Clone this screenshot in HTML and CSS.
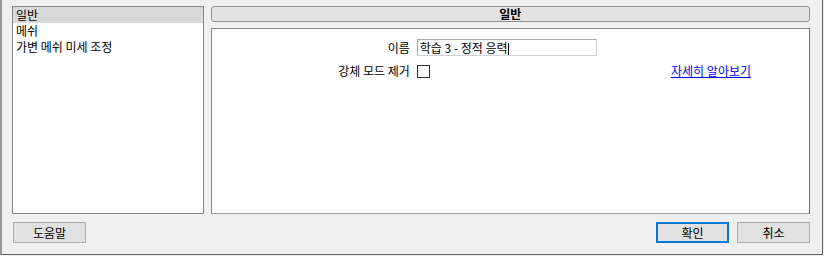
FILE: index.html
```html
<!DOCTYPE html>
<html>
    <head>
    <title>일반</title>
    <meta charset="UTF-8">
    <link rel="stylesheet" href="styles.css">
    </head>

    <body>
        <div class="ventana">
            <div class="principal">
                <div class="lista">
                    <div class="item seleccionado">일반</div>
                    <div class="item">메쉬</div>
                    <div class="item">가변 메쉬 미세 조정</div>
                </div>

                <div class="derecha">
                    <div class="titulo">일반</div>
                    <div class="panel">
                        <div class="formulario">
                            <span class="etiqueta">이름</span>
                            <div class="caja">학습 3 - 정적 응력<span class="cursor"></span></div>
                            <span></span>

                            <span class="etiqueta">강체 모드 제거</span>
                            <span class="check"></span>
                            <a class="enlace" href="#">자세히 알아보기</a>
                        </div>
                    </div>
                </div>
            </div>

            <div class="botones">
                <button class="boton">도움말</button>
                <div class="derecha-botones">
                    <button class="boton activo">확인</button>
                    <button class="boton">취소</button>
                </div>
            </div>
        </div>
    </body>
</html>
```

FILE: styles.css
```css
body{
    margin: 0;
    background-color: #f0f0f0;
    font-family: "Noto Sans CJK KR", "Noto Sans", sans-serif;
    font-size: 12px;
    color: black;
}

.ventana{
    box-sizing: border-box;
    width: 823px;
    height: 255px;
    border-left: 2px solid #9a9a9a;
    border-right: 1px solid #646464;
    border-bottom: 1px solid #646464;
    padding: 6px 12px 0 10px;
}

.principal{
    display: flex;
    gap: 7px;
    height: 208px;
}

.lista{
    box-sizing: border-box;
    width: 192px;
    background-color: white;
    border: 1px solid #828790;
}

.item{
    height: 16px;
    line-height: 16px;
    padding-left: 3px;
}

.seleccionado{
    background-color: #d9d9d9;
}

.derecha{
    display: flex;
    flex-direction: column;
    width: 600px;
}

.titulo{
    box-sizing: border-box;
    height: 16px;
    line-height: 14px;
    text-align: center;
    font-weight: bold;
    background-color: #e3e3e3;
    border: 1px solid #949494;
    border-radius: 3px;
}

.panel{
    box-sizing: border-box;
    flex: 1;
    margin-top: 6px;
    background-color: white;
    border: 1px solid #8a8a8a;
    border-right-color: #6e6e6e;
    border-bottom-color: #a0a0a0;
    padding-top: 10px;
}

.formulario{
    display: grid;
    grid-template-columns: 198px 180px 1fr;
    column-gap: 7px;
    row-gap: 7px;
    align-items: center;
}

.etiqueta{
    text-align: right;
    line-height: 16px;
}

.caja{
    box-sizing: border-box;
    height: 17px;
    line-height: 15px;
    border: 1px solid #7a7a7a;
    border-color: #a9a9a9 #d0d0d0 #d0d0d0 #a9a9a9;
    padding-left: 2px;
    white-space: nowrap;
}

.cursor{
    display: inline-block;
    width: 1px;
    height: 12px;
    background-color: black;
    vertical-align: -2px;
}

.check{
    box-sizing: border-box;
    width: 13px;
    height: 13px;
    border: 1px solid #333333;
    background-color: white;
}

.enlace{
    justify-self: end;
    margin-right: 58px;
    color: #0000ff;
    text-decoration: underline;
    line-height: 16px;
}

.botones{
    display: flex;
    justify-content: space-between;
    margin-top: 8px;
    padding-left: 1px;
}

.derecha-botones{
    display: flex;
    gap: 8px;
}

.boton{
    box-sizing: border-box;
    width: 73px;
    height: 21px;
    padding: 0;
    font-family: "Noto Sans CJK KR", "Noto Sans", sans-serif;
    font-size: 12px;
    color: black;
    background-color: #e1e1e1;
    border: 1px solid #adadad;
}

.activo{
    border: 2px solid #0078d7;
}
```
